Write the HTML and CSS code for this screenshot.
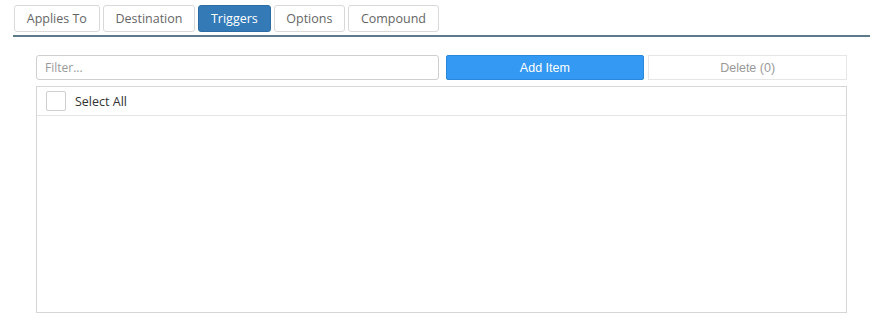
FILE: index.html
```html
<!DOCTYPE html>
<html>
<head>
<meta charset="utf-8">
<link rel="stylesheet" href="styles.css">
</head>
<body>
<div class="page">
  <div class="tabs">
    <div class="tab">Applies To</div>
    <div class="tab">Destination</div>
    <div class="tab active">Triggers</div>
    <div class="tab">Options</div>
    <div class="tab">Compound</div>
  </div>
  <div class="content">
    <div class="toolbar">
      <input class="filter" type="text" placeholder="Filter...">
      <button class="btn add">Add Item</button>
      <button class="btn del">Delete (0)</button>
    </div>
    <div class="list">
      <div class="list-head">
        <span class="check"></span>
        <span class="label">Select All</span>
      </div>
    </div>
  </div>
</div>
</body>
</html>
```
FILE: styles.css
```css
html, body { margin: 0; padding: 0; background: #fff; }
body { font-family: "Open Sans", "Noto Sans", sans-serif; color: #333; }
.page { padding: 5px 13px 0 13px; width: 857px; }
.tabs { display: flex; gap: 3px; padding-left: 1px; padding-bottom: 3px; border-bottom: 2px solid #5d7a8a; }
.tab {
  height: 25px; line-height: 25px; padding: 0 11.75px;
  border: 1px solid #d9d9d9; border-radius: 3px;
  font-size: 12.5px; color: #666; background: #fff;
}
.tab.active { background: #337ab7; border-color: #2e6da4; color: #fff; }
.content { padding: 18px 23px 0 23px; }
.toolbar { display: flex; gap: 0; height: 25px; }
.filter {
  box-sizing: border-box; width: 403px; height: 25px; margin: 0 7px 0 0;
  border: 1px solid #cfcfcf; border-radius: 3px; padding: 0 8px;
  font-family: "Open Sans", sans-serif; font-size: 12px; color: #333; outline: none;
}
.filter::placeholder { color: #999; }
.btn {
  box-sizing: border-box; height: 25px; margin: 0; padding: 0;
  font-family: "Liberation Sans", Arial, sans-serif; font-size: 12.5px; cursor: pointer;
}
.add { width: 199px; background: #3399f3; color: #fff; border: 1px solid #2a88dc; border-radius: 2px; margin-right: 4px; }
.del { width: 199px; background: #fff; color: #999; border: 1px solid #e6e6e6; border-radius: 0; }
.list {
  box-sizing: border-box; margin-top: 6px; width: 811px; height: 227px;
  border: 1px solid #d6d6d6;
}
.list-head {
  display: flex; align-items: center; height: 28px; padding-left: 9px;
  border-bottom: 1px solid #e3e3e3;
}
.check { box-sizing: border-box; width: 20px; height: 20px; border: 1px solid #cfcfcf; border-radius: 2px; background: #fff; }
.label { margin-left: 9px; font-size: 12.5px; color: #333; }
```
